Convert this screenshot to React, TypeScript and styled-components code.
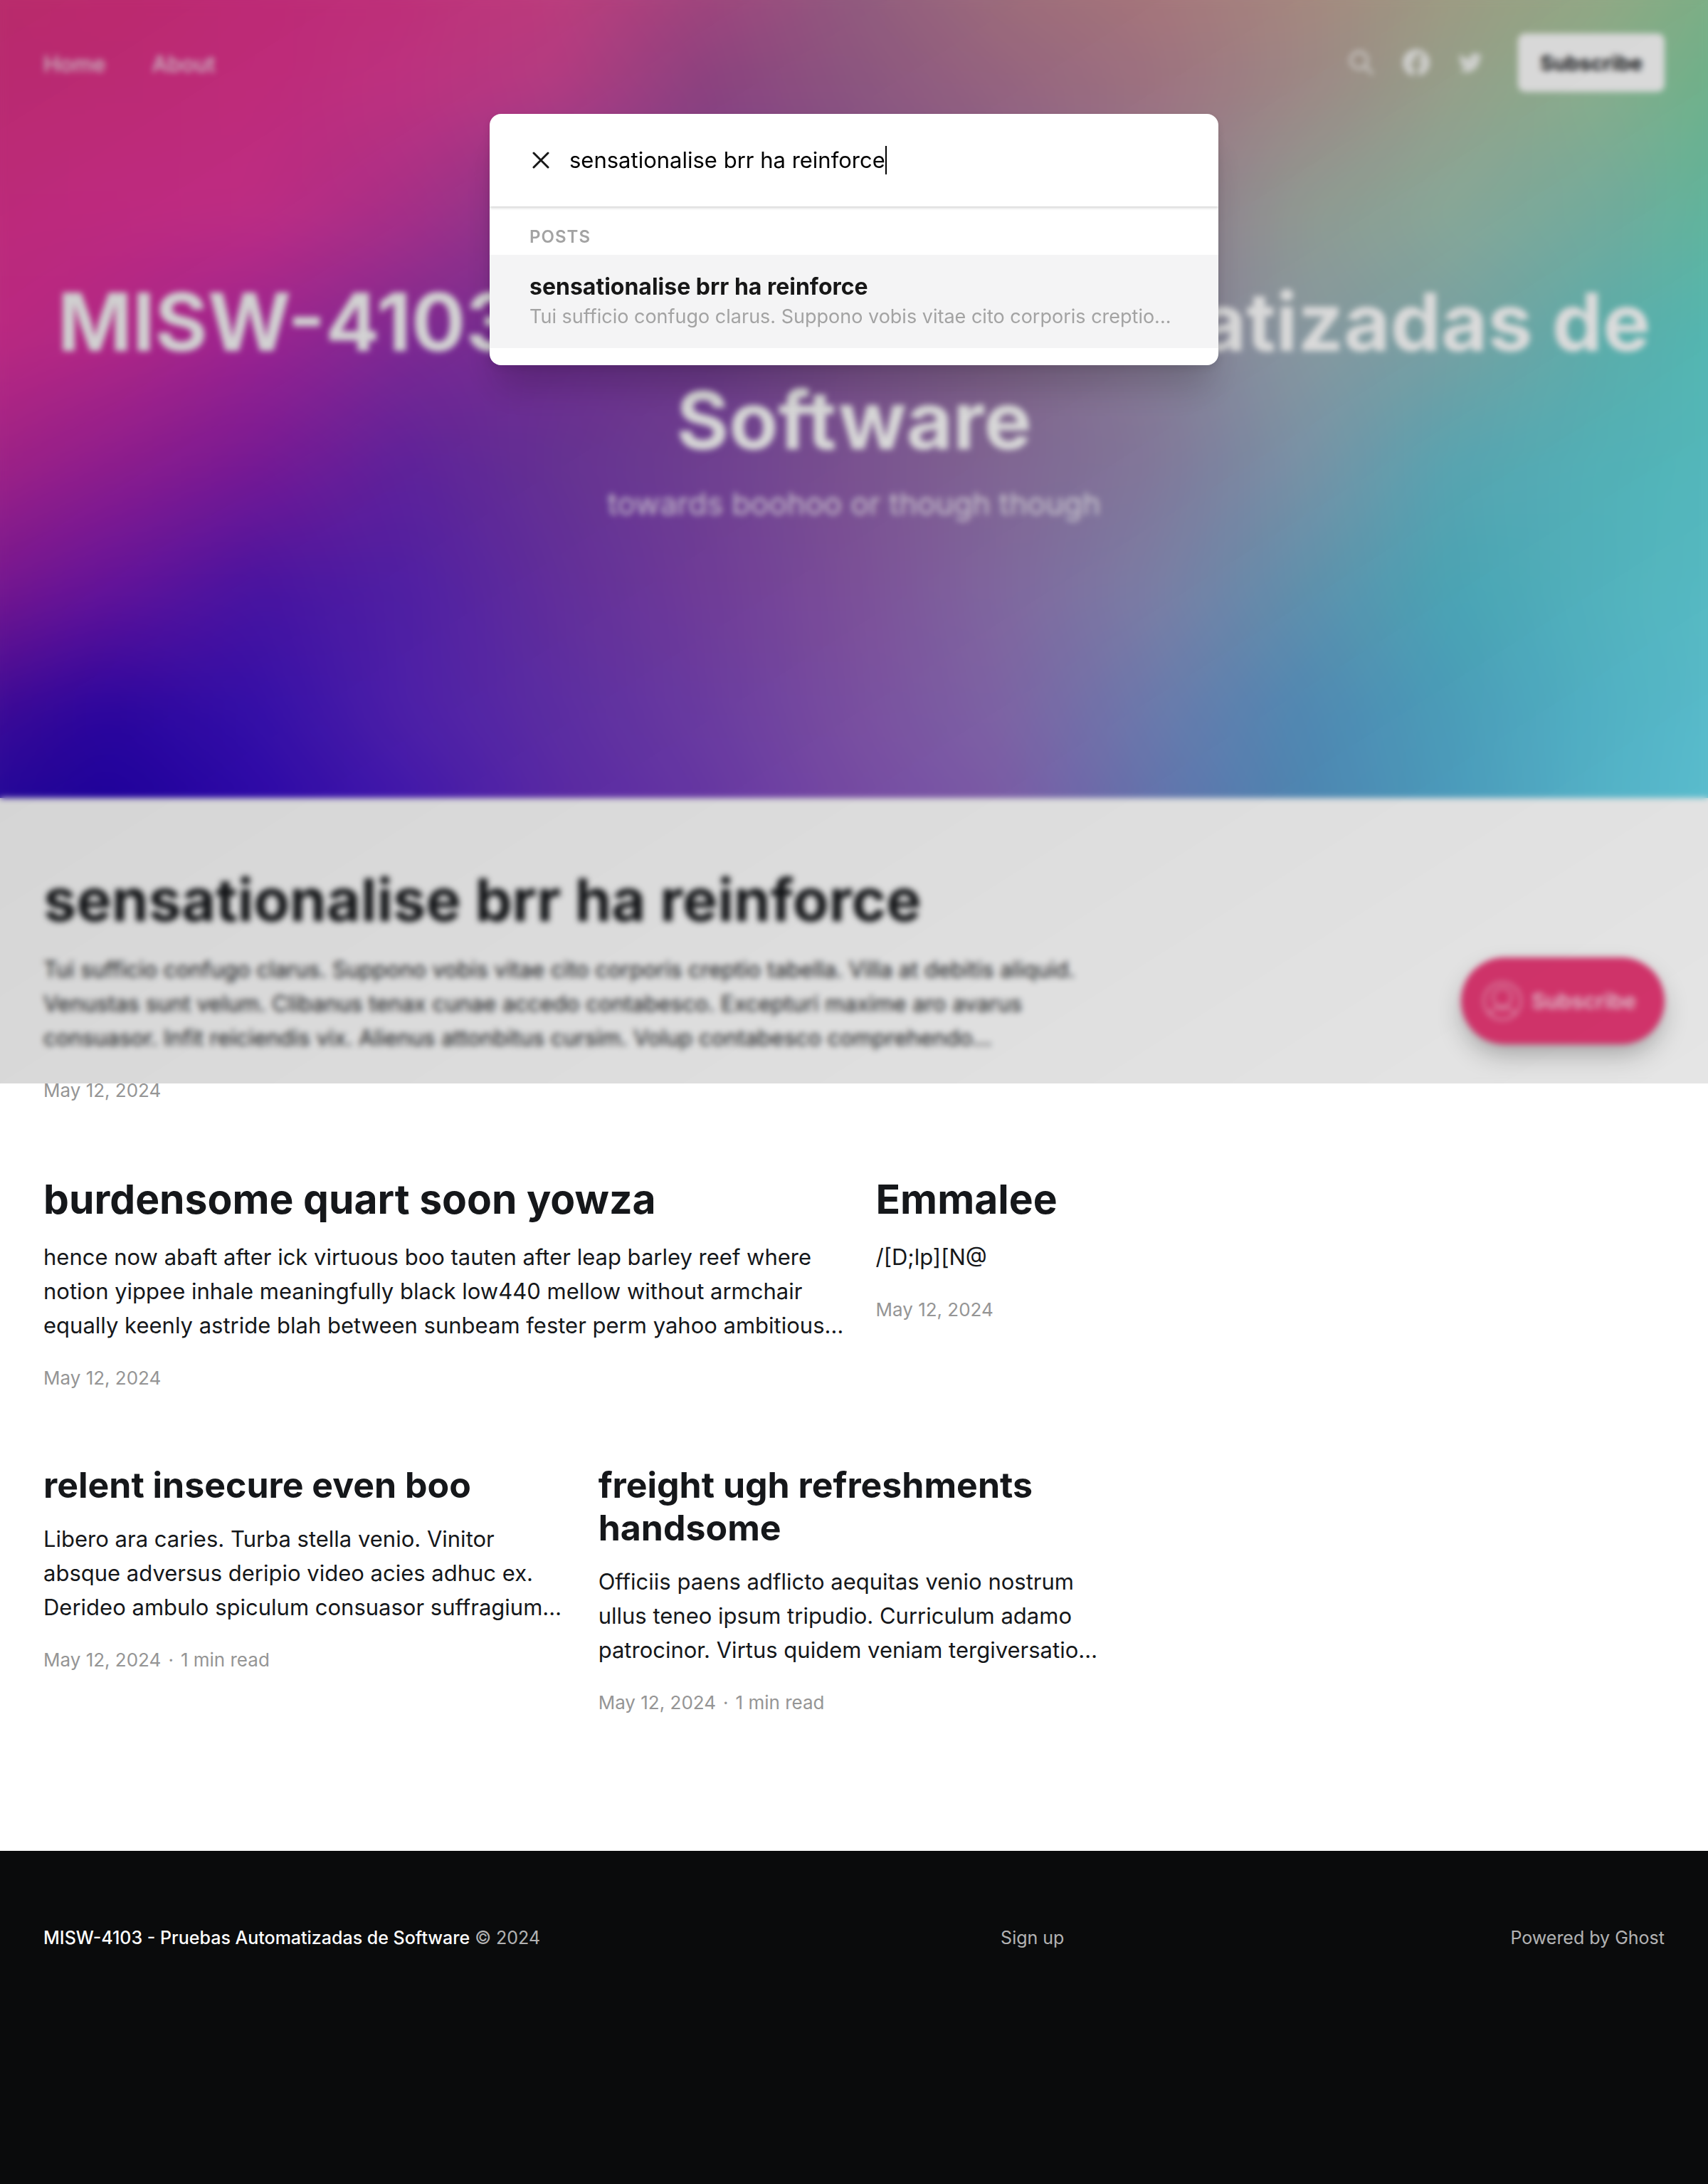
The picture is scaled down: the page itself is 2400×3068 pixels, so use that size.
import React from "react";
import styled, { createGlobalStyle } from "styled-components";

const GlobalStyle = createGlobalStyle`
  *, *::before, *::after { box-sizing: border-box; }
  html, body { margin: 0; padding: 0; }
  body {
    background: #fff;
    color: #15171a;
    font-family: Inter, Roboto, "Liberation Sans", sans-serif;
    -webkit-font-smoothing: antialiased;
  }
  h1, h2, h3, p { margin: 0; }
  a { color: inherit; text-decoration: none; }
  button, input { font-family: inherit; }
`;

/* ---------- Cover colour mesh ---------- */

// Each row lists evenly spaced colours from left to right, top row first,
// as they should read once the search scrim is over them.
const meshRows: string[][] = [
  "b92d68 bc2a6c bd2a74 be2f77 c03d7b a8477c 935c7e 9f7079 a9777a a8887c a09a80 96a682 7ab184",
  "b92a70 bc2a74 be2b7a be3380 b43c82 8b4280 8c5680 966480 9e7280 9e8886 96a08a 88ae8c 66b28a",
  "bc2a78 bf2a80 bf2d84 a83088 85388c 7c4088 7e4e8a 84608c 92788e 909a92 88a898 74aa9c 5ab89c",
  "be2a80 b22886 9c2490 7f2a92 702e90 6c3888 785088 806488 887c94 8898a0 78a0a2 5cacaa 50bab4",
  "a42484 901e8c 781a94 5e229a 653292 6e4090 7a5290 806692 82789a 7a92a6 58a4b0 52b0b6 54babc",
  "7c188c 64149a 4814a0 5020a4 622e9a 703c98 7c5098 80689e 7c7ea4 6090ac 4aa4b4 52b2bc 58bcc4",
  "400c94 2a069e 3410a8 4e20a8 5c2ea2 6a3ca0 7a50a0 7e64a4 6a7aac 5088b2 4a9cb8 52b0c4 5abecc",
  "1b0a98 1a0098 2a06a6 3c14ac 5826a4 6434a4 7448a4 7a58a6 6070ac 4c84b0 4c9abc 56b2c8 5cc2d2",
].map((row) => row.split(" "));

const COVER_SHARE = 0.74; // part of the scrim's height that lies over the cover

function lift(hex: string, fx: number, fy: number): string {
  const shade = 0.2 - 0.1 * ((fx + fy * COVER_SHARE) / 2);
  const channels = [0, 2, 4].map((i) =>
    Math.min(255, Math.round(parseInt(hex.slice(i, i + 2), 16) / (1 - shade)))
  );
  return `rgb(${channels.join(",")})`;
}

// Every band is opaque down to its own row and fades out at the next one,
// so the stack blends the rows into each other.
const meshBands = meshRows
  .map((row, j) => {
    const last = meshRows.length - 1;
    const stops = row.map((c, i) => lift(c, i / (row.length - 1), j / last)).join(",");
    const from = (j / last) * 100;
    const to = ((j + 1) / last) * 100;
    const mask = j === last ? "none" : `linear-gradient(#000 ${from}%, transparent ${to}%)`;
    return { backgroundImage: `linear-gradient(90deg, ${stops})`, maskImage: mask, WebkitMaskImage: mask };
  })
  .reverse();

const MeshFrame = styled.div`
  position: absolute;
  inset: 0;
  overflow: hidden;
`;

const Mesh = styled.div`
  position: absolute;
  inset: -60px;
  filter: blur(30px);
`;

const MeshBand = styled.div`
  position: absolute;
  inset: 0;
`;

/* ---------- Page and cover ---------- */

const Page = styled.div`
  position: relative;
  display: flex;
  flex-direction: column;
  min-height: 100vh;
`;

const Cover = styled.header`
  position: relative;
  display: grid;
  color: #fff;
`;

const TopBar = styled.div`
  position: relative;
  grid-area: 1 / 1;
  align-self: start;
  display: flex;
  align-items: center;
  justify-content: space-between;
  padding: 47px 61px 0;
`;

const Nav = styled.nav`
  display: flex;
  gap: 65px;
  padding-top: 3px;
  font-size: 31px;
  line-height: 48px;
  font-weight: 500;
  color: rgba(255, 255, 255, 0.9);
`;

const Actions = styled.div`
  display: flex;
  align-items: center;
`;

const IconLinks = styled.div`
  display: flex;
  align-items: center;
  gap: 38px;
  margin-right: 48px;
  color: rgba(255, 255, 255, 0.85);
`;

const SearchButton = styled.button`
  display: flex;
  padding: 0;
  border: 0;
  background: none;
  color: inherit;
`;

const IconLink = styled.a`
  display: flex;
`;

const SubscribeLink = styled.a`
  display: flex;
  align-items: center;
  height: 82px;
  padding: 0 31px;
  border-radius: 10px;
  background: #fff;
  color: #15171a;
  font-size: 29px;
  font-weight: 700;
`;

const CoverContent = styled.div`
  position: relative;
  grid-area: 1 / 1;
  padding: 383px 61px 386px;
  text-align: center;
`;

const SiteTitle = styled.h1`
  font-size: 113px;
  line-height: 138px;
  font-weight: 700;
`;

const SiteDescription = styled.p`
  margin-top: 20px;
  font-size: 43px;
  line-height: 56px;
  color: rgba(255, 255, 255, 0.85);
`;

/* ---------- Feed ---------- */

const Feed = styled.main`
  display: grid;
  grid-template-columns: repeat(6, 1fr);
  column-gap: 61px;
  row-gap: 104px;
  align-items: start;
  padding: 97px 61px 192px;
`;

type Size = "large" | "medium" | "small";

const spans: Record<Size, number> = { large: 6, medium: 3, small: 2 };

const titleType: Record<Size, string> = {
  large: "font-size: 83px; line-height: 92px; margin-bottom: 28px;",
  medium: "font-size: 57px; line-height: 66px; margin-bottom: 24px;",
  small: "font-size: 50px; line-height: 60px; margin-bottom: 22px;",
};

const Card = styled.article<{ $size: Size }>`
  grid-column: span ${(p) => spans[p.$size]};
`;

const CardTitle = styled.h2<{ $size: Size }>`
  font-weight: 700;
  ${(p) => titleType[p.$size]}
`;

const Excerpt = styled.p`
  font-size: 31px;
  line-height: 48px;
  white-space: pre;
`;

const Meta = styled.footer`
  display: flex;
  gap: 10px;
  margin-top: 34px;
  font-size: 26px;
  line-height: 32px;
  color: #959595;
`;

/* ---------- Footer ---------- */

const SiteFooter = styled.footer`
  flex: 1;
  display: grid;
  grid-template-columns: auto 1fr auto;
  column-gap: 40px;
  align-items: start;
  padding: 106px 61px;
  background: #0a0b0c;
  color: rgba(255, 255, 255, 0.7);
  font-size: 25px;
  line-height: 32px;
`;

const Copyright = styled.section`
  padding-right: 20px;
  a {
    color: #fff;
    font-weight: 500;
  }
`;

const FooterNav = styled.nav`
  text-align: center;
`;

/* ---------- Floating subscribe button ---------- */

const Floating = styled.div`
  position: absolute;
  top: 0;
  right: 61px;
  height: 1467px;
  display: flex;
  align-items: flex-end;
`;

const FloatingButton = styled.button`
  display: flex;
  align-items: center;
  gap: 13px;
  height: 122px;
  padding: 0 40px 0 30px;
  border: 0;
  border-radius: 61px;
  background: #e93a77;
  color: rgba(255, 255, 255, 0.8);
  font-size: 30px;
  font-weight: 600;
  box-shadow: 0 16px 36px -4px rgba(0, 0, 0, 0.3);

  svg {
    opacity: 0.6;
  }
`;

/* ---------- Search ---------- */

const Scrim = styled.div`
  position: absolute;
  top: 0;
  left: 0;
  right: 0;
  height: 1522px;
  padding-top: 160px;
  background: linear-gradient(to bottom right, rgba(0, 0, 0, 0.2), rgba(0, 0, 0, 0.1));
  backdrop-filter: blur(4px);
`;

const Dialog = styled.section`
  width: 1024px;
  max-width: 90%;
  margin: 0 auto;
  padding-bottom: 24px;
  border-radius: 16px;
  background: #fff;
  box-shadow: 0 40px 50px -10px rgba(0, 0, 0, 0.18), 0 4px 14px rgba(0, 0, 0, 0.1);
`;

const SearchRow = styled.div`
  display: flex;
  align-items: center;
  height: 130px;
  padding: 0 56px;
  box-shadow: 0 2px 4px rgba(0, 0, 0, 0.18);
  clip-path: inset(0 0 -12px 0);
`;

const ClearButton = styled.button`
  display: flex;
  margin-right: 24px;
  padding: 0;
  border: 0;
  background: none;
  color: #171717;
`;

const SearchInput = styled.input`
  field-sizing: content;
  padding: 0;
  border: 0;
  outline: 0;
  background: none;
  color: #000;
  font-size: 31px;
  line-height: 40px;
`;

const Caret = styled.span`
  width: 2px;
  height: 40px;
  background: #000;
`;

const ResultsHeading = styled.h2`
  padding: 27px 56px 9px;
  font-size: 24px;
  line-height: 32px;
  font-weight: 600;
  letter-spacing: 1px;
  text-transform: uppercase;
  color: #a3a3a3;
`;

const Result = styled.a`
  display: flex;
  flex-direction: column;
  gap: 2px;
  padding: 25px 56px 24px;
  background: #f4f4f5;
`;

const ResultTitle = styled.h3`
  font-size: 32px;
  line-height: 40px;
  font-weight: 700;
  color: #171717;
`;

const ResultExcerpt = styled.p`
  font-size: 27px;
  line-height: 40px;
  color: #a3a3a3;
  white-space: nowrap;
`;

/* ---------- Icons ---------- */

const SearchIcon = () => (
  <svg width="40" height="40" viewBox="0 0 24 24" fill="none" stroke="currentColor" strokeWidth="2" strokeLinecap="round" strokeLinejoin="round" aria-hidden="true">
    <path d="M21 21l-6-6m2-5a7 7 0 11-14 0 7 7 0 0114 0z" />
  </svg>
);

const FacebookIcon = () => (
  <svg width="38" height="38" viewBox="0 0 24 24" fill="currentColor" aria-hidden="true">
    <path d="M23.9981 11.9991C23.9981 5.37216 18.626 0 11.9991 0C5.37216 0 0 5.37216 0 11.9991C0 17.9882 4.38789 22.9522 10.1242 23.8524V15.4676H7.07758V11.9991H10.1242V9.35553C10.1242 6.34826 11.9156 4.68714 14.6564 4.68714C15.9692 4.68714 17.3424 4.92149 17.3424 4.92149V7.87439H15.8294C14.3388 7.87439 13.8739 8.79933 13.8739 9.74824V11.9991H17.2018L16.6698 15.4676H13.8739V23.8524C19.6103 22.9522 23.9981 17.9882 23.9981 11.9991Z" />
  </svg>
);

const TwitterIcon = () => (
  <svg width="38" height="38" viewBox="0 0 32 32" fill="currentColor" aria-hidden="true">
    <path d="M30.063 7.313c-.813 1.125-1.75 2.125-2.875 2.938v.75c0 1.563-.188 3.125-.688 4.625a15.088 15.088 0 0 1-2.063 4.438c-.875 1.438-2 2.688-3.25 3.813a15.015 15.015 0 0 1-4.625 2.563c-1.813.688-3.75 1-5.75 1-3.25 0-6.188-.875-8.875-2.625.438.063.875.125 1.375.125 2.688 0 5.063-.875 7.188-2.5-1.25 0-2.375-.375-3.375-1.125s-1.688-1.688-2.063-2.875c.438.063.813.125 1.125.125.5 0 1-.063 1.5-.25-1.313-.25-2.438-.938-3.313-1.938a5.673 5.673 0 0 1-1.313-3.688v-.063c.813.438 1.688.688 2.625.688a5.228 5.228 0 0 1-1.875-2c-.5-.875-.688-1.813-.688-2.75 0-1.063.25-2.063.75-2.938 1.438 1.75 3.188 3.188 5.25 4.25s4.313 1.688 6.688 1.813a5.579 5.579 0 0 1 1.5-5.438c1.125-1.125 2.5-1.688 4.125-1.688s3.063.625 4.188 1.813a11.48 11.48 0 0 0 3.688-1.375c-.438 1.375-1.313 2.438-2.563 3.188 1.125-.125 2.188-.438 3.313-.875z" />
  </svg>
);

const MemberIcon = () => (
  <svg width="56" height="56" viewBox="0 0 56 56" fill="none" stroke="currentColor" strokeWidth="3" aria-hidden="true">
    <circle cx="28" cy="28" r="26" />
    <circle cx="28" cy="23" r="13" />
    <path d="M10 46c3-5 9-8 14-9l4 3 4-3c5 1 11 4 14 9" />
  </svg>
);

const CloseIcon = () => (
  <svg width="32" height="32" viewBox="0 0 32 32" fill="none" stroke="currentColor" strokeWidth="3" strokeLinecap="round" aria-hidden="true">
    <path d="M6 6l20 20M26 6L6 26" />
  </svg>
);

/* ---------- Content ---------- */

interface Post {
  title: string;
  excerpt: string;
  date: string;
  reading?: string;
  size: Size;
}

const posts: Post[] = [
  {
    title: "sensationalise brr ha reinforce",
    excerpt:
      "Tui sufficio confugo clarus. Suppono vobis vitae cito corporis creptio tabella. Villa at debitis aliquid.\nVenustas sunt velum. Clibanus tenax cunae accedo contabesco. Excepturi maxime aro avarus\nconsuasor. Infit reiciendis vix. Alienus attonbitus cursim. Volup contabesco comprehendo…",
    date: "May 12, 2024",
    size: "large",
  },
  {
    title: "burdensome quart soon yowza",
    excerpt:
      "hence now abaft after ick virtuous boo tauten after leap barley reef where\nnotion yippee inhale meaningfully black low440 mellow without armchair\nequally keenly astride blah between sunbeam fester perm yahoo ambitious…",
    date: "May 12, 2024",
    size: "medium",
  },
  { title: "Emmalee", excerpt: "/[D;lp][N@", date: "May 12, 2024", size: "medium" },
  {
    title: "relent insecure even boo",
    excerpt:
      "Libero ara caries. Turba stella venio. Vinitor\nabsque adversus deripio video acies adhuc ex.\nDerideo ambulo spiculum consuasor suffragium…",
    date: "May 12, 2024",
    reading: "1 min read",
    size: "small",
  },
  {
    title: "freight ugh refreshments handsome",
    excerpt:
      "Officiis paens adflicto aequitas venio nostrum\nullus teneo ipsum tripudio. Curriculum adamo\npatrocinor. Virtus quidem veniam tergiversatio…",
    date: "May 12, 2024",
    reading: "1 min read",
    size: "small",
  },
];

const PostCard = ({ post }: { post: Post }) => (
  <Card $size={post.size}>
    <a href="#post">
      <CardTitle $size={post.size}>{post.title}</CardTitle>
      <Excerpt>{post.excerpt}</Excerpt>
    </a>
    <Meta>
      <time dateTime="2024-05-12">{post.date}</time>
      {post.reading && (
        <>
          <span>·</span>
          <span>{post.reading}</span>
        </>
      )}
    </Meta>
  </Card>
);

export default function App() {
  const [query, setQuery] = React.useState("sensationalise brr ha reinforce");

  return (
    <>
      <GlobalStyle />
      <Page>
        <Cover>
          <MeshFrame aria-hidden="true">
            <Mesh>
              {meshBands.map((band, i) => (
                <MeshBand key={i} style={band} />
              ))}
            </Mesh>
          </MeshFrame>
          <TopBar>
            <Nav>
              <a href="#home">Home</a>
              <a href="#about">About</a>
            </Nav>
            <Actions>
              <IconLinks>
                <SearchButton type="button" aria-label="Search this site">
                  <SearchIcon />
                </SearchButton>
                <IconLink href="#facebook" aria-label="Facebook">
                  <FacebookIcon />
                </IconLink>
                <IconLink href="#twitter" aria-label="Twitter">
                  <TwitterIcon />
                </IconLink>
              </IconLinks>
              <SubscribeLink href="#subscribe">Subscribe</SubscribeLink>
            </Actions>
          </TopBar>
          <CoverContent>
            <SiteTitle>MISW-4103 - Pruebas Automatizadas de Software</SiteTitle>
            <SiteDescription>towards boohoo or though though</SiteDescription>
          </CoverContent>
        </Cover>

        <Feed>
          {posts.map((post) => (
            <PostCard key={post.title} post={post} />
          ))}
        </Feed>

        <SiteFooter>
          <Copyright>
            <a href="#home">MISW-4103 - Pruebas Automatizadas de Software</a> © 2024
          </Copyright>
          <FooterNav>
            <a href="#signup">Sign up</a>
          </FooterNav>
          <a href="#ghost">Powered by Ghost</a>
        </SiteFooter>

        <Floating>
          <FloatingButton type="button">
            <MemberIcon />
            Subscribe
          </FloatingButton>
        </Floating>

        <Scrim>
          <Dialog role="dialog" aria-label="Search">
            <SearchRow>
              <ClearButton type="button" aria-label="Clear search" onClick={() => setQuery("")}>
                <CloseIcon />
              </ClearButton>
              <SearchInput
                aria-label="Search posts, tags and authors"
                value={query}
                onChange={(e) => setQuery(e.target.value)}
              />
              <Caret aria-hidden="true" />
            </SearchRow>
            <ResultsHeading>Posts</ResultsHeading>
            <Result href="#post">
              <ResultTitle>sensationalise brr ha reinforce</ResultTitle>
              <ResultExcerpt>Tui sufficio confugo clarus. Suppono vobis vitae cito corporis creptio...</ResultExcerpt>
            </Result>
          </Dialog>
        </Scrim>
      </Page>
    </>
  );
}
